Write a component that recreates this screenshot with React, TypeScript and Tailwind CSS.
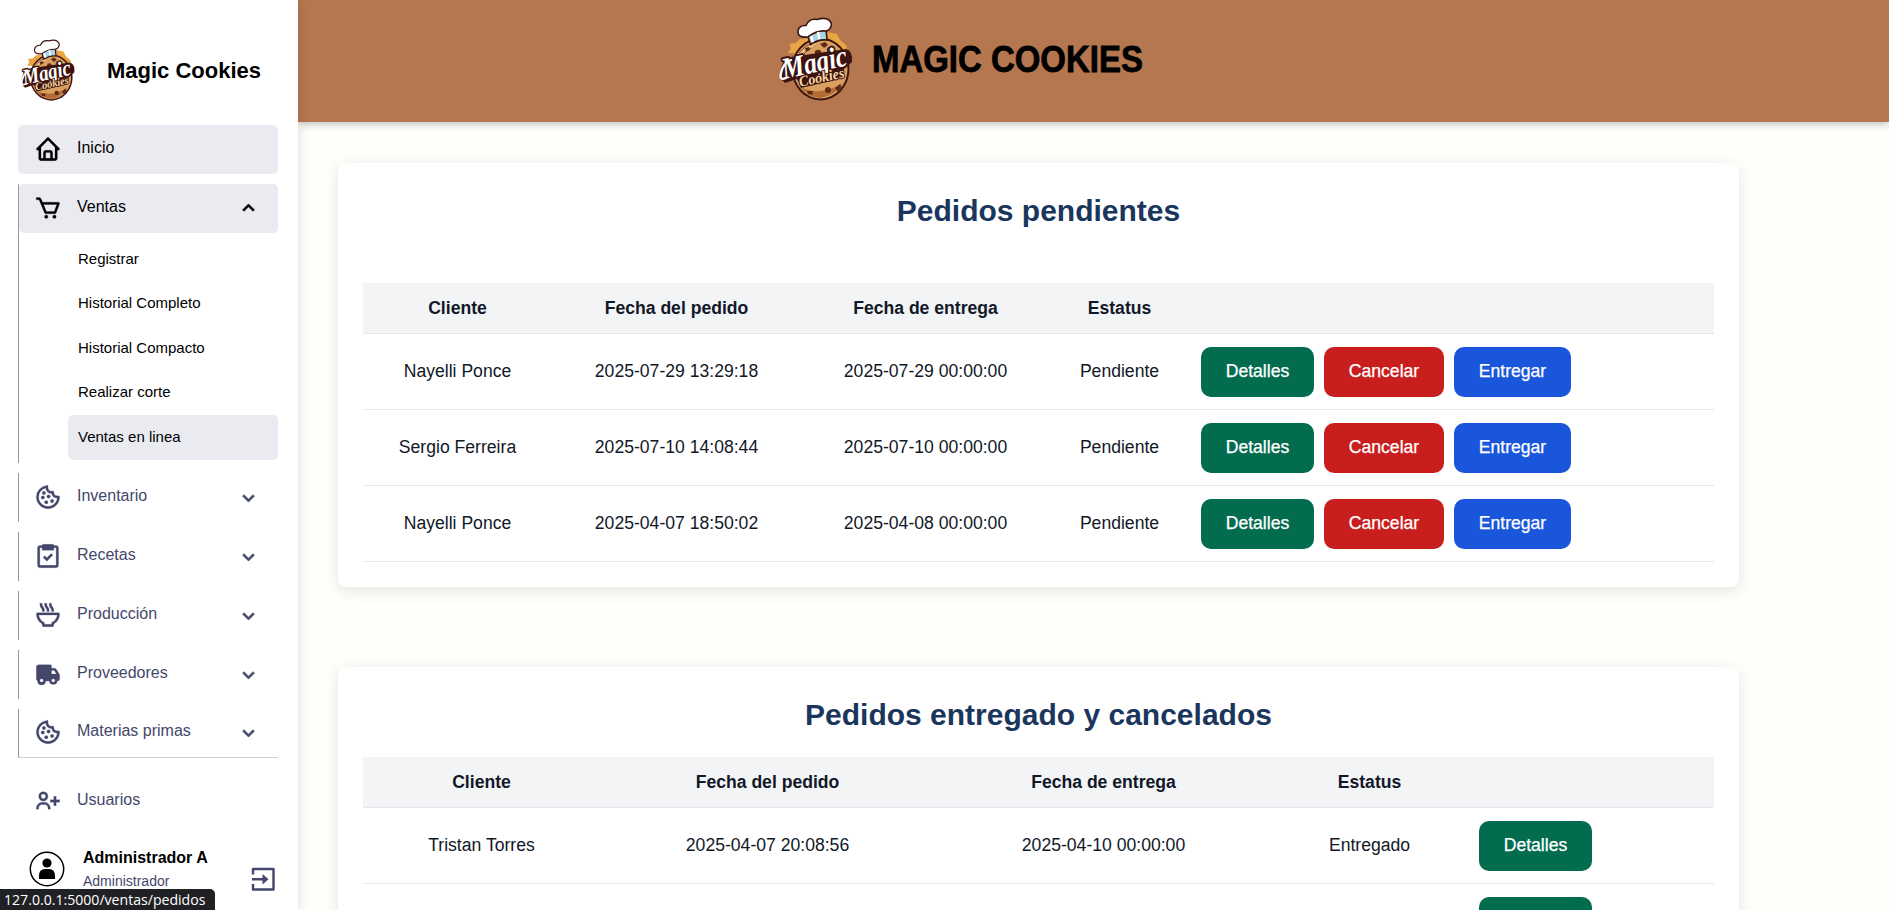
import React from "react";
import {
  BiHome, BiCart, BiCookie, BiTask, BiBowlHot, BiSolidTruck, BiUserPlus,
  BiChevronDown, BiChevronUp,
} from "react-icons/bi";

function Logo({ className }: { className: string }) {
  return (
    <svg viewBox="0 0 77 84" className={className}>
      <path d="M11 36 L14 31 L12 27 L19 26 L23 22 L34 21 L50 15 L60 17 L63 23 L70 29 L68 40 Z" fill="#e9a443" />
      <ellipse cx="43.5" cy="52" rx="29" ry="31.5" fill="#3d1410" />
      <ellipse cx="43.5" cy="52" rx="27" ry="29.5" fill="#d9a05f" />
      <path d="M19 39 Q27 25 43 24 Q33 30 27 39Z" fill="#efbf7d" />
      <path d="M23 70 Q43 80 66 66 Q58 79 43 81 Q31 80 23 70Z" fill="#b26d36" />
      <path d="M22 36 Q29 27 40 25 M25 40 Q29 33 34 31" fill="none" stroke="#6b3018" strokeWidth="1" />
      <g fill="#5e2a18">
        <circle cx="41" cy="36" r="3.2" /><circle cx="53" cy="33" r="3.2" />
        <path d="M43 27l5-2 3 3-4 3z" /><circle cx="62" cy="37" r="2" />
        <path d="M28 31l4-1 1 3-4 2z" /><path d="M58 71l5-4 2 4-4 4z" />
        <circle cx="51" cy="73" r="3" /><path d="M30 74l6 0-1 4-4-1z" />
      </g>
      <path d="M30 16 L33.500 27.500 Q41 22 50 23 L49 12 Z" fill="#a9d4e8" stroke="#3d1410" strokeWidth="1.6" />
      <path d="M31 20 Q20 21 21 14 Q22 8 29 8.500 Q32 1 40 2.500 Q52 -1 54.500 7 Q54 13 49 14 Q40 13 31 20Z" fill="#fff" stroke="#3d1410" strokeWidth="1.6" />
      <path d="M34 19 L36 25 M41 15 L42.500 22" stroke="#fff" strokeWidth="2.500" />
      <path d="M3 60 Q3 44 14 40 L69 32 Q76 34 75 45 L67 52 L66 61 L24 71 L20 62 L8 66Z" fill="#3d1410" />
      <g transform="translate(7 62) rotate(-12)" fontFamily="'Liberation Serif', serif" fontStyle="italic" fontWeight="700" strokeLinejoin="round">
        <text fontSize="30" textLength="66" lengthAdjust="spacingAndGlyphs" fill="#fff" stroke="#3d1410" strokeWidth="4" paintOrder="stroke">Magic</text>
        <text x="14" y="11" fontSize="15" textLength="46" lengthAdjust="spacingAndGlyphs" fill="#f6d9a0" stroke="#3d1410" strokeWidth="2" paintOrder="stroke">Cookies</text>
      </g>
      <path d="M9 61 Q2 64 4 56 Q6 46 14 43" fill="none" stroke="#fff" strokeWidth="2.400" strokeLinecap="round" />
    </svg>
  );
}

type ItemProps = { icon: React.ElementType; label: string; active?: boolean; chevron?: "up" | "down"; line?: boolean; underline?: boolean };

function Item({ icon: Icon, label, active, chevron, line, underline }: ItemProps) {
  return (
    <div className={`h-[49px] w-[260px] shrink-0 ${line ? "border-l border-l-[#9396ab]" : ""} ${underline ? "border-b border-b-[#cfd1d6]" : ""}`}>
      <div className={`flex h-full items-center rounded-[5px] ${line ? "pl-[14.5px]" : "pl-[15.5px]"} ${active ? "bg-[#eaebf1] text-black" : "text-[#44476a]"}`}>
        <Icon className="mb-[2px] size-7 stroke-current stroke-[0.2]" />
        <span className="mb-1 ml-[15.5px] flex-1 text-base leading-5">{label}</span>
        {chevron === "up" && <BiChevronUp className="mr-[17px] size-[25px] stroke-current stroke-[0.6]" />}
        {chevron === "down" && <BiChevronDown className="mr-[17px] mb-px size-[25px] stroke-current stroke-[0.6]" />}
      </div>
    </div>
  );
}

const submenu = ["Registrar", "Historial Completo", "Historial Compacto", "Realizar corte", "Ventas en linea"];

function Sidebar() {
  return (
    <aside className="relative z-10 flex h-full w-[298px] shrink-0 flex-col bg-white px-[18px] shadow-[2px_0_10px_rgba(0,0,0,0.1)]">
      <div className="flex h-[125px] shrink-0 items-center pt-[15px]">
        <Logo className="ml-px h-[62px] w-[57px]" />
        <span className="ml-[31px] text-[22px] font-bold whitespace-nowrap text-black">Magic Cookies</span>
      </div>
      <nav className="flex flex-col gap-[10px]">
        <Item icon={BiHome} label="Inicio" active />
        <div>
          <Item icon={BiCart} label="Ventas" active chevron="up" line />
          <div className="flex h-[230px] w-[260px] flex-col border-l border-[#9396ab] pt-[4px] pl-[49px]">
            {submenu.map((s, i) => (
              <div key={s} className={`flex h-[44.6px] items-center rounded-[5px] pb-px pl-[10px] text-[15px] text-black ${i === 4 ? "bg-[#eaebf1]" : ""}`}>{s}</div>
            ))}
          </div>
        </div>
        <Item icon={BiCookie} label="Inventario" chevron="down" line />
        <Item icon={BiTask} label="Recetas" chevron="down" line />
        <Item icon={BiBowlHot} label="Producción" chevron="down" line />
        <Item icon={BiSolidTruck} label="Proveedores" chevron="down" line />
        <Item icon={BiCookie} label="Materias primas" chevron="down" line underline />
      </nav>
      <div className="mt-[19px]">
        <Item icon={BiUserPlus} label="Usuarios" />
      </div>
      <div className="mt-[22px] flex pl-[11px]">
        <svg viewBox="0 0 36 36" className="mt-[3px] size-9">
          <circle cx="18" cy="18" r="16.7" fill="none" stroke="#000" strokeWidth="1.5" />
          <circle cx="18" cy="12" r="4.6" />
          <path d="M10 28 v-3 q0-7 6-7 h4 q6 0 6 7 v3z" />
        </svg>
        <div className="ml-[18px] flex-1 whitespace-nowrap">
          <div className="text-base leading-5 font-bold text-black">Administrador A</div>
          <div className="mt-[3px] text-sm leading-5 text-[#44476a]">Administrador</div>
        </div>
        <svg viewBox="0 0 24 24" className="mt-[19px] mr-[5px] size-6" fill="none" stroke="#44476a" strokeWidth="2.4" strokeLinejoin="round">
          <path d="M2 7.500V2h20.500v20.500H2v-5.500M1 12.300h13" />
          <path d="M11.500 7L17.500 12.300L11.500 17.500z" fill="#44476a" stroke="none" />
        </svg>
      </div>
    </aside>
  );
}

const buttonColors = { Detalles: "w-[113px] bg-[#046c4e]", Cancelar: "w-[120px] bg-[#c81e1e]", Entregar: "w-[117px] bg-[#1a56db]" };

type Row = { cells: string[]; actions: (keyof typeof buttonColors)[] };

function Orders({ title, cols, rows, headGap }: { title: string; cols: string; rows: Row[]; headGap: string }) {
  return (
    <section className="w-[1401px] shrink-0 rounded-[8px] bg-white p-[25px] shadow-[0_4px_15px_rgba(0,0,0,0.1)]">
      <h2 className={`text-center text-[30px] leading-[45px] font-bold text-[#1a365d] ${headGap}`}>{title}</h2>
      <div className="text-[17.6px] text-[#111827]">
        <div className={`grid h-[51px] items-center border-b border-[#e5e7eb] bg-[#f3f4f6] text-center font-bold ${cols}`}>
          {["Cliente", "Fecha del pedido", "Fecha de entrega", "Estatus"].map((h) => <div key={h}>{h}</div>)}
        </div>
        {rows.map((r, i) => (
          <div key={i} className={`grid h-[76px] items-center border-b border-[#e5e7eb] text-center ${cols}`}>
            {r.cells.map((c, j) => <div key={j}>{c}</div>)}
            <div className="flex gap-[10px] pl-3">
              {r.actions.map((a) => (
                <button key={a} className={`h-[50px] rounded-[10px] pb-[2px] text-[17.6px] leading-5 text-white [-webkit-text-stroke:0.25px_white] ${buttonColors[a]}`}>{a}</button>
              ))}
            </div>
          </div>
        ))}
      </div>
    </section>
  );
}

const pending: Row[] = [
  { cells: ["Nayelli Ponce", "2025-07-29 13:29:18", "2025-07-29 00:00:00", "Pendiente"], actions: ["Detalles", "Cancelar", "Entregar"] },
  { cells: ["Sergio Ferreira", "2025-07-10 14:08:44", "2025-07-10 00:00:00", "Pendiente"], actions: ["Detalles", "Cancelar", "Entregar"] },
  { cells: ["Nayelli Ponce", "2025-04-07 18:50:02", "2025-04-08 00:00:00", "Pendiente"], actions: ["Detalles", "Cancelar", "Entregar"] },
];

const closed: Row[] = [
  { cells: ["Tristan Torres", "2025-04-07 20:08:56", "2025-04-10 00:00:00", "Entregado"], actions: ["Detalles"] },
  { cells: ["", "", "", ""], actions: ["Detalles"] },
];

export default function App() {
  return (
    <div className="relative flex h-screen w-full overflow-hidden bg-[#fffefa] font-['Liberation_Sans',Arial,sans-serif]">
      <Sidebar />
      <div className="flex min-w-0 flex-1 flex-col">
        <header className="flex h-[122px] shrink-0 items-center bg-[#b5774f] pb-[4px] pl-[479px] shadow-[0_2px_8px_rgba(0,0,0,0.25)]">
          <Logo className="h-[84px] w-[77px]" />
          <h1 className="mt-[2px] ml-[18px] origin-left scale-x-[0.915] text-4xl font-bold whitespace-nowrap text-black [-webkit-text-stroke:0.8px_black]">MAGIC COOKIES</h1>
        </header>
        <main className="flex min-h-0 flex-1 flex-col gap-20 overflow-hidden pt-[41px] pl-10">
          <Orders title="Pedidos pendientes" headGap="mb-[50px]" cols="grid-cols-[189px_249px_249px_139px_1fr]" rows={pending} />
          <Orders title="Pedidos entregado y cancelados" headGap="mb-5" cols="grid-cols-[237px_335px_337px_195px_1fr]" rows={closed} />
        </main>
      </div>
      <div className="absolute bottom-0 left-0 z-20 h-[21px] w-[215px] rounded-tr-[5px] bg-[#202124] pl-1 font-['Open_Sans',sans-serif] text-[14.1px] leading-[21px] whitespace-nowrap text-white">
        127.0.0.1:5000/ventas/pedidos
      </div>
    </div>
  );
}
